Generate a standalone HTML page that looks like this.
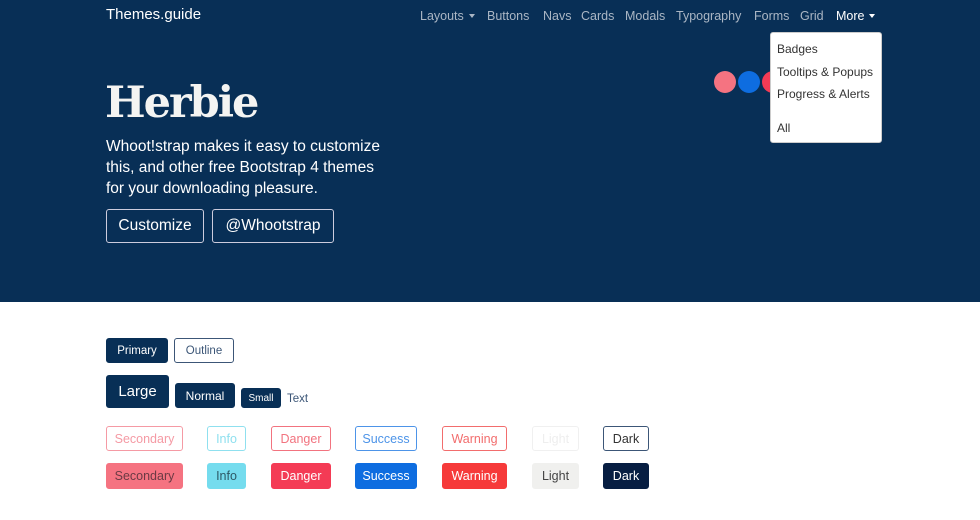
<!DOCTYPE html>
<html><head><style>
*{margin:0;padding:0;box-sizing:border-box}
body{width:980px;height:520px;overflow:hidden;background:#fff;font-family:"Liberation Sans",sans-serif;position:relative}
.hero{position:absolute;left:0;top:0;width:980px;height:302px;background:#082f56}
.a{position:absolute;white-space:nowrap}
.nav{color:#aab6c4;font-size:12.5px;top:9px}
.car{display:inline-block;width:0;height:0;border-left:3.5px solid transparent;border-right:3.5px solid transparent;border-top:4px solid currentColor;vertical-align:2px;margin-left:5px}
.b{position:absolute;border-radius:3px;font-size:12.5px;display:flex;align-items:center;justify-content:center;border:1px solid}
.dot{position:absolute;width:22px;height:22px;border-radius:50%;top:71px}
</style></head><body>
<div class="hero"></div>
<div class="a" style="left:106px;top:6px;color:#fff;font-size:15px">Themes.guide</div>
<div class="a nav" style="left:420px">Layouts<span class="car"></span></div>
<div class="a nav" style="left:487px">Buttons</div>
<div class="a nav" style="left:543px">Navs</div>
<div class="a nav" style="left:581px">Cards</div>
<div class="a nav" style="left:625px">Modals</div>
<div class="a nav" style="left:676px">Typography</div>
<div class="a nav" style="left:754px">Forms</div>
<div class="a nav" style="left:800px">Grid</div>
<div class="a nav" style="left:836px;color:#fff">More<span class="car"></span></div>
<div class="dot" style="left:714px;background:#f57381"></div>
<div class="dot" style="left:738px;background:#0e6de0"></div>
<div class="dot" style="left:762px;background:#f43b55"></div>
<div class="a" style="left:770px;top:32px;width:112px;height:111px;background:#fff;border:1px solid #ccc;border-radius:3px;font-size:12px;color:#333">
<div class="a" style="left:6px;top:9px">Badges</div>
<div class="a" style="left:6px;top:32px">Tooltips &amp; Popups</div>
<div class="a" style="left:6px;top:54px">Progress &amp; Alerts</div>
<div class="a" style="left:6px;top:88px">All</div>
</div>
<div class="a" style="left:105px;top:78px;color:#f4f4f2;font-size:43px;font-weight:bold;font-family:'DejaVu Serif','Liberation Serif',serif;letter-spacing:-2px">Herbie</div>
<div class="a" style="left:106px;top:136px;color:#fff;font-size:15.5px;line-height:21px">Whoot!strap makes it easy to customize<br>this, and other free Bootstrap 4 themes<br>for your downloading pleasure.</div>
<div class="b" style="left:106px;top:209px;width:98px;height:34px;color:#fff;border-color:#ccd;font-size:15.5px">Customize</div>
<div class="b" style="left:212px;top:209px;width:122px;height:34px;color:#fff;border-color:#ccd;font-size:15.5px">@Whootstrap</div>

<div class="b" style="left:106px;top:338px;width:62px;height:25px;background:#082f56;border-color:#082f56;color:#fff;font-size:11.5px">Primary</div>
<div class="b" style="left:174px;top:338px;width:60px;height:25px;border-color:#3c5677;color:#3c5677;font-size:11.5px">Outline</div>
<div class="b" style="left:106px;top:375px;width:63px;height:33px;background:#082f56;border-color:#082f56;color:#fff;font-size:15px">Large</div>
<div class="b" style="left:175px;top:383px;width:60px;height:25px;background:#082f56;border-color:#082f56;color:#fff;font-size:12px">Normal</div>
<div class="b" style="left:241px;top:388px;width:40px;height:20px;background:#082f56;border-color:#082f56;color:#fff;font-size:10px">Small</div>
<div class="a" style="left:287px;top:393px;color:#3c5677;font-size:11.5px">Text</div>

<div class="b" style="left:106px;top:426px;width:77px;height:25px;border-color:#f59aa4;color:#f59aa4">Secondary</div>
<div class="b" style="left:207px;top:426px;width:39px;height:25px;border-color:#8fe0ef;color:#8fe0ef">Info</div>
<div class="b" style="left:271px;top:426px;width:60px;height:25px;border-color:#f2737f;color:#f2737f">Danger</div>
<div class="b" style="left:355px;top:426px;width:62px;height:25px;border-color:#4d94e8;color:#4d94e8">Success</div>
<div class="b" style="left:442px;top:426px;width:65px;height:25px;border-color:#f26d6d;color:#f26d6d">Warning</div>
<div class="b" style="left:532px;top:426px;width:47px;height:25px;border-color:#f0f0f0;color:#eee">Light</div>
<div class="b" style="left:603px;top:426px;width:46px;height:25px;border-color:#3c5677;color:#333">Dark</div>

<div class="b" style="left:106px;top:463px;width:77px;height:26px;background:#f57381;border-color:#f57381;color:#6b3a44">Secondary</div>
<div class="b" style="left:207px;top:463px;width:39px;height:26px;background:#75dcee;border-color:#75dcee;color:#2d5a66">Info</div>
<div class="b" style="left:271px;top:463px;width:60px;height:26px;background:#f43b55;border-color:#f43b55;color:#fff">Danger</div>
<div class="b" style="left:355px;top:463px;width:62px;height:26px;background:#0e6de0;border-color:#0e6de0;color:#fff">Success</div>
<div class="b" style="left:442px;top:463px;width:65px;height:26px;background:#f63a3a;border-color:#f63a3a;color:#fff">Warning</div>
<div class="b" style="left:532px;top:463px;width:47px;height:26px;background:#f0f0ee;border-color:#f0f0ee;color:#444">Light</div>
<div class="b" style="left:603px;top:463px;width:46px;height:26px;background:#071e42;border-color:#071e42;color:#fff">Dark</div>
</body></html>
